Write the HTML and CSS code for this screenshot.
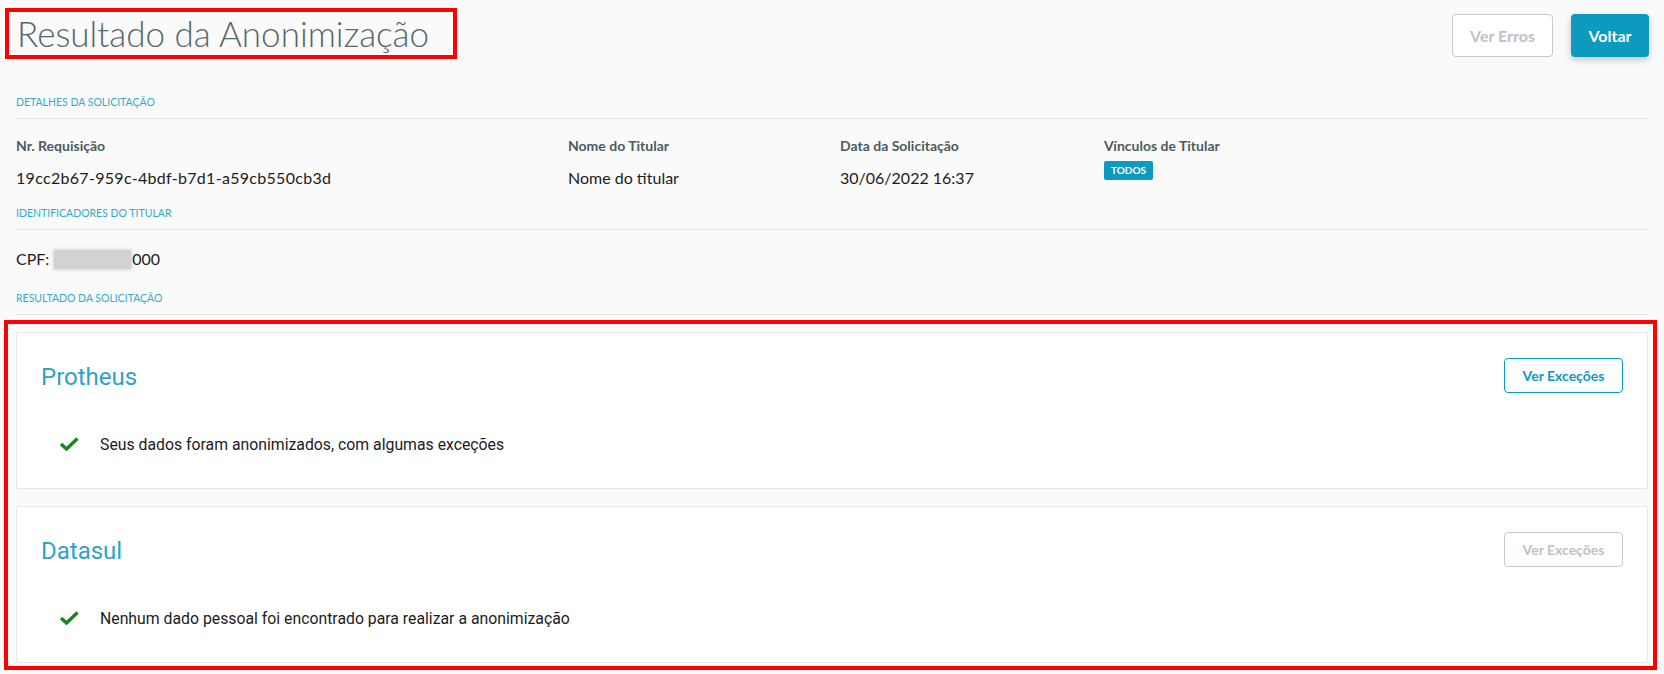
FILE: index.html
```html
<!DOCTYPE html>
<html lang="pt-BR">
<head>
    <meta charset="utf-8">
    <title>Resultado da Anonimização</title>
    <link rel="stylesheet" href="styles.css">
</head>
<body>

<div class="page">
    <div class="page-header">
        <h1 class="page-title">Resultado da Anonimização</h1>
        <div class="page-actions">
            <button class="btn btn-disabled">Ver Erros</button>
            <button class="btn btn-primary">Voltar</button>
        </div>
    </div>

    <div class="section-label">Detalhes da solicitação</div>
    <div class="details">
        <div class="field">
            <div class="field-label">Nr. Requisição</div>
            <div class="field-value request-id">19cc2b67-959c-4bdf-b7d1-a59cb550cb3d</div>
        </div>
        <div class="field">
            <div class="field-label">Nome do Titular</div>
            <div class="field-value">Nome do titular</div>
        </div>
        <div class="field">
            <div class="field-label">Data da Solicitação</div>
            <div class="field-value">30/06/2022 16:37</div>
        </div>
        <div class="field">
            <div class="field-label">Vínculos de Titular</div>
            <span class="tag">TODOS</span>
        </div>
    </div>

    <div class="section-label">Identificadores do titular</div>
    <div class="cpf">CPF: <span class="blur"></span>000</div>

    <div class="section-label">Resultado da solicitação</div>

    <div class="results">
        <div class="card">
            <div class="card-header">
                <h2 class="card-title">Protheus</h2>
                <button class="btn btn-outline">Ver Exceções</button>
            </div>
            <div class="card-row">
                <svg class="check" width="20" height="14" viewBox="0 0 20 14"><polyline points="2,7 7.5,12 18.5,1.5" fill="none" stroke="#178717" stroke-width="3.4"/></svg>
                <span>Seus dados foram anonimizados, com algumas exceções</span>
            </div>
        </div>
        <div class="card">
            <div class="card-header">
                <h2 class="card-title">Datasul</h2>
                <button class="btn btn-outline btn-off">Ver Exceções</button>
            </div>
            <div class="card-row">
                <svg class="check" width="20" height="14" viewBox="0 0 20 14"><polyline points="2,7 7.5,12 18.5,1.5" fill="none" stroke="#178717" stroke-width="3.4"/></svg>
                <span>Nenhum dado pessoal foi encontrado para realizar a anonimização</span>
            </div>
        </div>
    </div>
</div>

</body>
</html>
```

FILE: styles.css
```css
html, body {
    margin: 0;
    padding: 0;
}
body {
    background: #fafafa;
    font-family: Lato, 'Open Sans', sans-serif;
    color: #1c1c1c;
}
.page {
    padding: 0 16px;
    height: 674px;
    box-sizing: border-box;
    overflow: hidden;
}
.page-header {
    display: flex;
    justify-content: space-between;
    align-items: flex-start;
    padding-top: 8px;
    margin-left: -11px;
    margin-right: -1px;
}
.page-title {
    margin: 0;
    height: 43px;
    padding: 0 24px 0 8px;
    border: 4px solid #ff0000;
    font-weight: 300;
    font-size: 35px;
    line-height: 43px;
    color: #56666b;
}
.page-actions {
    display: flex;
    gap: 18px;
    margin-top: 6px;
}
.btn {
    font-family: Lato, sans-serif;
    font-weight: 700;
    border-radius: 4px;
    background: #fff;
    cursor: pointer;
}
.page-actions .btn {
    height: 43px;
    font-size: 16px;
}
.btn-disabled {
    width: 101px;
    border: 1px solid #c5cacc;
    color: #bcc3c6;
}
.btn-primary {
    width: 78px;
    border: none;
    background: #0c9abe;
    color: #fff;
    box-shadow: 0 3px 7px rgba(0, 0, 0, 0.22);
}
.section-label {
    margin-top: 35px;
    padding-bottom: 8px;
    border-bottom: 1px solid #e4e6e7;
    font-size: 10.5px;
    line-height: 16px;
    text-transform: uppercase;
    color: #32abc8;
}
.details {
    display: grid;
    grid-template-columns: 552px 272px 264px 1fr;
    margin-top: 17px;
}
.field-label {
    font-size: 14px;
    font-weight: 700;
    line-height: 20px;
    color: #4a5c60;
}
.field-value {
    margin-top: 12px;
    font-size: 16px;
    line-height: 20px;
}
.request-id {
    letter-spacing: 0.3px;
}
.tag {
    display: inline-block;
    margin-top: 5px;
    padding: 0 7px;
    height: 19px;
    line-height: 19px;
    border-radius: 2px;
    background: #0c9abe;
    color: #fff;
    font-size: 10px;
    font-weight: 700;
}
.details + .section-label {
    margin-top: 17px;
}
.cpf {
    margin-top: 19px;
    font-size: 16px;
    line-height: 20px;
    display: flex;
    align-items: center;
}
.blur {
    display: inline-block;
    width: 77px;
    height: 19px;
    margin: 0 1px 0 5px;
    background: #d2d2d2;
    box-shadow: 0 0 3px 1px #d8d8d8;
}
.cpf + .section-label {
    margin-top: 21px;
}
.results {
    margin: 5px -9px 0 -12px;
    padding: 8px 5px 3px 8px;
    border: 4px solid #ff0000;
    display: flex;
    flex-direction: column;
    gap: 17px;
}
.card {
    background: #fff;
    border: 1px solid #e8e8e8;
    border-radius: 2px;
    padding: 25px 24px 34px;
    font-family: Roboto, 'Liberation Sans', sans-serif;
}
.card-header {
    display: flex;
    justify-content: space-between;
    align-items: center;
    height: 35px;
}
.card-title {
    margin: 2px 0 0;
    font-size: 24px;
    font-weight: 400;
    color: #2ea2c9;
}
.btn-outline {
    width: 119px;
    height: 35px;
    border: 1px solid #0c9abe;
    color: #0c9abe;
    font-size: 14px;
}
.btn-outline.btn-off {
    border-color: #c5cacc;
    color: #bcc3c6;
}
.card-row {
    display: flex;
    align-items: center;
    height: 20px;
    margin-top: 41px;
    font-size: 15.8px;
    color: #1c1c1c;
}
.check {
    margin: 0 21px 0 18px;
}
```
